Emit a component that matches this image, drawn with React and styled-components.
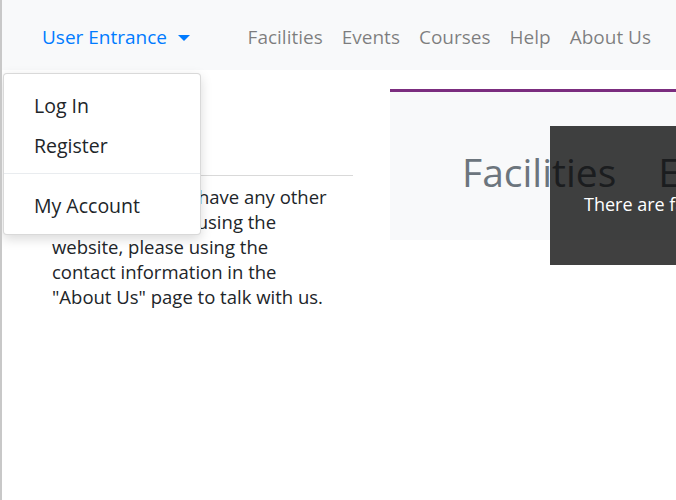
import React from "react";
import styled, { createGlobalStyle } from "styled-components";

const GlobalStyle = createGlobalStyle`
  html, body {
    margin: 0;
    padding: 0;
    background: #fff;
  }
  body {
    border-left: 2px solid #c8c8c8;
    min-height: 500px;
    overflow: hidden;
    font-family: "Open Sans", "Noto Sans", sans-serif;
    color: #212529;
  }
`;

const Page = styled.div`
  position: relative;
  width: 674px;
  height: 500px;
  overflow: hidden;
`;

const Navbar = styled.nav`
  display: flex;
  align-items: center;
  height: 70px;
  box-sizing: border-box;
  padding: 4px 25px 0 40px;
  background: #f8f9fa;
`;

const Toggle = styled.a`
  display: flex;
  align-items: center;
  gap: 11px;
  font-size: 19px;
  color: #007bff;
  cursor: pointer;
`;

const Caret = styled.span`
  width: 0;
  height: 0;
  margin-top: 1px;
  border-left: 6px solid transparent;
  border-right: 6px solid transparent;
  border-top: 6px solid #007bff;
`;

const NavLinks = styled.ul`
  display: flex;
  gap: 19px;
  margin: 0 0 0 auto;
  padding: 0;
  list-style: none;
`;

const NavLink = styled.li`
  font-size: 19px;
  color: rgba(0, 0, 0, 0.5);
  cursor: pointer;
`;

const Menu = styled.div`
  position: absolute;
  left: 1px;
  top: 73px;
  width: 198px;
  padding: 11px 0 9px;
  box-sizing: border-box;
  background: #fff;
  border: 1px solid rgba(0, 0, 0, 0.15);
  border-radius: 4px;
  box-shadow: 0 4px 12px rgba(0, 0, 0, 0.15);
  z-index: 10;
`;

const MenuItem = styled.div`
  height: 40px;
  display: flex;
  align-items: center;
  padding-left: 30px;
  font-size: 19.5px;
  color: #212529;
`;

const MenuDivider = styled.div`
  height: 1px;
  margin: 8px 0 11px;
  background: #e9ecef;
`;

const Main = styled.main`
  display: flex;
  align-items: flex-start;
`;

const Sidebar = styled.section`
  width: 321px;
  margin-left: 30px;
  flex-shrink: 0;
`;

const SideTitle = styled.h4`
  margin: 0;
  height: 105px;
  display: flex;
  align-items: center;
  padding-left: 20px;
  font-size: 22px;
  font-weight: 400;
`;

const Rule = styled.hr`
  margin: 0 0 8px;
  border: 0;
  border-top: 1px solid #d9d9d9;
`;

const SideText = styled.p`
  margin: 0;
  padding: 0 22px 0 20px;
  font-size: 18.5px;
  line-height: 25px;
`;

const Showcase = styled.section`
  flex: 1;
  margin: 19px 0 0 37px;
  height: 148px;
  background: #f8f9fa;
  border-top: 3px solid #7b2d7f;
  display: flex;
  align-items: center;
  padding-left: 72px;
  gap: 42px;
  overflow: hidden;
  white-space: nowrap;
`;

const ShowTitle = styled.span`
  font-size: 39px;
  color: #6c757d;
  margin-top: 10px;
`;

const Caption = styled.div`
  position: absolute;
  left: 548px;
  top: 126px;
  width: 160px;
  height: 139px;
  background: rgba(0, 0, 0, 0.75);
  color: #fff;
  font-size: 18px;
  padding: 66px 0 0 34px;
  box-sizing: border-box;
  white-space: nowrap;
`;

const links = ["Facilities", "Events", "Courses", "Help", "About Us"];

export default function App() {
  return (
    <Page>
      <GlobalStyle />
      <Navbar>
        <Toggle>
          User Entrance <Caret />
        </Toggle>
        <NavLinks>
          {links.map(l => (
            <NavLink key={l}>{l}</NavLink>
          ))}
        </NavLinks>
      </Navbar>
      <Menu>
        <MenuItem>Log In</MenuItem>
        <MenuItem>Register</MenuItem>
        <MenuDivider />
        <MenuItem>My Account</MenuItem>
      </Menu>
      <Main>
        <Sidebar>
          <SideTitle>Contact</SideTitle>
          <Rule />
          <SideText>
            Moreover, if you have any other questions about using the website,
            please using the contact information in the "About Us" page to talk
            with us.
          </SideText>
        </Sidebar>
        <Showcase>
          <ShowTitle>Facilities</ShowTitle>
          <ShowTitle>Events</ShowTitle>
        </Showcase>
      </Main>
      <Caption>There are facilities for all students.</Caption>
    </Page>
  );
}
